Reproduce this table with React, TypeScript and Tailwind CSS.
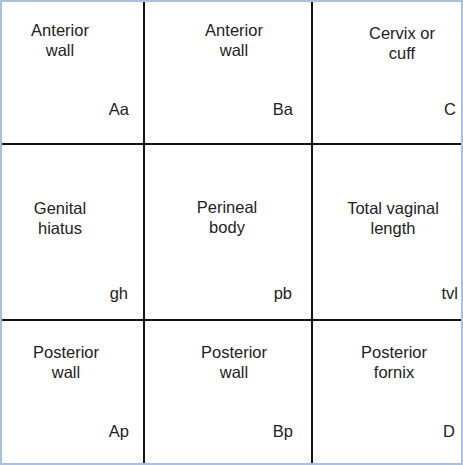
const cells = [
  { text: ['Anterior', 'wall'], code: 'Aa', top: 'pt-[18px] pr-[25px]', corner: 'pr-[14px] pb-[24px]' },
  { text: ['Anterior', 'wall'], code: 'Ba', top: 'pt-[18px] pl-[12px]', corner: 'pr-[18px] pb-[24px]' },
  { text: ['Cervix or', 'cuff'], code: 'C', top: 'pt-[21px] pl-[30px]', corner: 'pr-[5px] pb-[24px]' },
  { text: ['Genital', 'hiatus'], code: 'gh', top: 'pt-[53px] pr-[25px]', corner: 'pr-[15px] pb-[16px]' },
  { text: ['Perineal', 'body'], code: 'pb', top: 'pt-[52px] pr-[2px]', corner: 'pr-[19px] pb-[16px]' },
  { text: ['Total vaginal', 'length'], code: 'tvl', top: 'pt-[53px] pl-[12px]', corner: 'pr-[3px] pb-[16px]' },
  { text: ['Posterior', 'wall'], code: 'Ap', top: 'pt-[21px] pr-[13px]', corner: 'pr-[14px] pb-[22px]' },
  { text: ['Posterior', 'wall'], code: 'Bp', top: 'pt-[21px] pl-[12px]', corner: 'pr-[18px] pb-[22px]' },
  { text: ['Posterior', 'fornix'], code: 'D', top: 'pt-[21px] pl-[14px]', corner: 'pr-[6px] pb-[22px]' },
]

export default function App() {
  return (
    <div className="h-[465px] w-[463px] bg-white">
      <div
        className="grid h-full w-full grid-cols-[141px_166px_148px] grid-rows-[141px_174px_142px] gap-[2px] border-2 border-[#a9c0df] bg-[#151515] font-['Liberation_Sans',Arial,sans-serif] text-[16.5px] leading-[20px] text-[#222]"
      >
        {cells.map((c, i) => (
          <div key={i} className="flex flex-col bg-white">
            <div className={`text-center ${c.top}`}>
              {c.text.map((t) => (
                <div key={t}>{t}</div>
              ))}
            </div>
            <div className={`mt-auto self-end ${c.corner}`}>{c.code}</div>
          </div>
        ))}
      </div>
    </div>
  )
}
